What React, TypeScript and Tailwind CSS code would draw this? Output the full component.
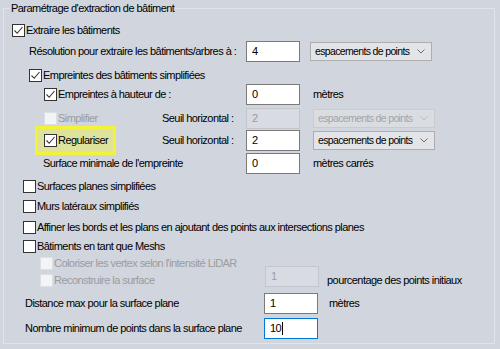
import React from "react";

function Check({ checked = false, disabled = false }: { checked?: boolean; disabled?: boolean }) {
  return (
    <span
      className={
        disabled
          ? "flex h-[13px] w-[13px] shrink-0 items-center justify-center border border-[#dcdfe3] bg-[#f3f4f6]"
          : "flex h-[13px] w-[13px] shrink-0 items-center justify-center border border-[#333333] bg-white"
      }
    >
      {checked && (
        <svg width="11" height="11" viewBox="0 0 11 11">
          <path d="M1.5 5.5 L4.2 8.3 L9.5 2" stroke="#333" strokeWidth="1.1" fill="none" />
        </svg>
      )}
    </span>
  );
}

function TextBox({
  value,
  disabled = false,
  focused = false,
  className = "",
}: {
  value: string;
  disabled?: boolean;
  focused?: boolean;
  className?: string;
}) {
  let look = "border-[#7a7a7a] bg-white text-black";
  if (disabled) look = "border-[#c3c6cc] bg-[#d8dbe1] text-[#9a9ca0]";
  if (focused) look = "border-[#0078d7] bg-white text-black";
  return (
    <span className={`flex h-[21px] w-[54px] shrink-0 items-start border pl-[5px] pt-[2px] ${look} ${className}`}>
      {value}
      {focused && <span className="ml-[1px] mt-[1px] h-[13px] w-[1px] bg-black" />}
    </span>
  );
}

function Dropdown({ disabled = false, className = "" }: { disabled?: boolean; className?: string }) {
  return (
    <span
      className={
        disabled
          ? `flex h-[19px] w-[122px] shrink-0 items-center justify-between overflow-hidden whitespace-nowrap border border-[#c8cbd0] bg-[#d9dce1] pl-[4px] pr-[6px] text-[#a3a5a9] ${className}`
          : `flex h-[19px] w-[122px] shrink-0 items-center justify-between overflow-hidden whitespace-nowrap border border-[#adadad] bg-[#e3e4e7] pl-[4px] pr-[6px] text-black ${className}`
      }
    >
      <span className="text-[10.5px] tracking-[-0.65px]">espacements de points</span>
      <svg width="8" height="5" viewBox="0 0 8 5" className="shrink-0">
        <path d="M0.5 0.5 L4 4 L7.5 0.5" stroke={disabled ? "#b9bbbf" : "#6d6d6d"} strokeWidth="1" fill="none" />
      </svg>
    </span>
  );
}

export default function App() {
  return (
    <div className="h-[349px] w-[500px] overflow-hidden bg-[#d1d5dd] pl-[3px] pt-[8px] font-['Liberation_Sans',Arial,sans-serif] text-[11px] leading-[14px] tracking-[-0.55px] text-black">
      <div className="relative flex h-[336px] w-[492px] flex-col border border-[#e0e3e8] pt-[11px]">
        <span className="absolute left-[6px] top-[-8px] bg-[#d1d5dd] px-[1px]">
          Paramétrage d'extraction de bâtiment
        </span>

        {/* Extraire les bâtiments */}
        <div className="h-[21px] shrink-0">
          <div className="flex h-[20px] items-center gap-[1px] pl-[8px]">
            <Check checked />
            <span>Extraire les bâtiments</span>
          </div>
        </div>

        {/* Résolution */}
        <div className="h-[24px] shrink-0">
          <div className="flex h-[20px] items-center pl-[25px]">
            <span className="w-[217px]">Résolution pour extraire les bâtiments/arbres à :</span>
            <TextBox value="4" />
            <Dropdown className="ml-[10px]" />
          </div>
        </div>

        {/* Empreintes simplifiées */}
        <div className="h-[19px] shrink-0">
          <div className="flex h-[20px] items-center gap-[1px] pl-[25px]">
            <Check checked />
            <span>Empreintes des bâtiments simplifiées</span>
          </div>
        </div>

        {/* Empreintes à hauteur */}
        <div className="h-[24px] shrink-0">
          <div className="flex h-[20px] items-center pl-[40px]">
            <span className="flex w-[202px] items-center gap-[1px]">
              <Check checked />
              <span>Empreintes à hauteur de :</span>
            </span>
            <TextBox value="0" />
            <span className="ml-[13px]">mètres</span>
          </div>
        </div>

        {/* Simplifier */}
        <div className="h-[22px] shrink-0">
          <div className="flex h-[20px] items-center pl-[40px]">
            <span className="flex w-[118px] items-center gap-[1px] text-[#9a9ca0]">
              <Check disabled />
              <span>Simplifier</span>
            </span>
            <span className="w-[84px]">Seuil horizontal :</span>
            <TextBox value="2" disabled />
            <Dropdown disabled className="ml-[13px]" />
          </div>
        </div>

        {/* Regulariser */}
        <div className="h-[23px] shrink-0">
          <div className="flex h-[20px] items-center pl-[40px]">
            <span className="w-[118px]">
              <span className="-ml-[6px] flex h-[23px] w-[75px] items-center gap-[1px] bg-[#dfe29b] pl-[6px] outline-[3px] outline-solid outline-[#f2f23a]">
                <Check checked />
                <span>Regulariser</span>
              </span>
            </span>
            <span className="w-[84px]">Seuil horizontal :</span>
            <TextBox value="2" />
            <Dropdown className="ml-[13px]" />
          </div>
        </div>

        {/* Surface minimale */}
        <div className="h-[23px] shrink-0">
          <div className="flex h-[20px] items-center pl-[39px]">
            <span className="w-[203px]">Surface minimale de l'empreinte</span>
            <TextBox value="0" />
            <span className="ml-[13px]">mètres carrés</span>
          </div>
        </div>

        {/* Surfaces planes */}
        <div className="h-[20px] shrink-0">
          <div className="flex h-[20px] items-center gap-[1px] pl-[19px]">
            <Check />
            <span>Surfaces planes simplifiées</span>
          </div>
        </div>

        {/* Murs latéraux */}
        <div className="h-[21px] shrink-0">
          <div className="flex h-[20px] items-center gap-[1px] pl-[19px]">
            <Check />
            <span>Murs latéraux simplifiés</span>
          </div>
        </div>

        {/* Affiner */}
        <div className="h-[19px] shrink-0">
          <div className="flex h-[20px] items-center gap-[1px] pl-[19px]">
            <Check />
            <span>Affiner les bords et les plans en ajoutant des points aux intersections planes</span>
          </div>
        </div>

        {/* Meshs */}
        <div className="h-[17px] shrink-0">
          <div className="flex h-[20px] items-center gap-[1px] pl-[19px]">
            <Check />
            <span>Bâtiments en tant que Meshs</span>
          </div>
        </div>

        {/* Coloriser */}
        <div className="h-[17px] shrink-0">
          <div className="flex h-[20px] items-center gap-[1px] pl-[36px] text-[#9a9ca0]">
            <Check disabled />
            <span>Coloriser les vertex selon l'intensité LiDAR</span>
          </div>
        </div>

        {/* Reconstruire */}
        <div className="h-[23px] shrink-0">
          <div className="flex h-[20px] items-center pl-[36px]">
            <span className="flex w-[225px] items-center gap-[1px] text-[#9a9ca0]">
              <Check disabled />
              <span>Reconstruire la surface</span>
            </span>
            <TextBox value="1" disabled className="mb-[7px]" />
            <span className="ml-[8px]">pourcentage des points initiaux</span>
          </div>
        </div>

        {/* Distance max */}
        <div className="h-[25px] shrink-0">
          <div className="flex h-[20px] items-center pl-[21px]">
            <span className="w-[239px]">Distance max pour la surface plane</span>
            <TextBox value="1" />
            <span className="ml-[11px]">mètres</span>
          </div>
        </div>

        {/* Nombre minimum */}
        <div className="h-[20px] shrink-0">
          <div className="flex h-[20px] items-center pl-[21px]">
            <span className="w-[239px]">Nombre minimum de points dans la surface plane</span>
            <TextBox value="10" focused />
          </div>
        </div>
      </div>
    </div>
  );
}
